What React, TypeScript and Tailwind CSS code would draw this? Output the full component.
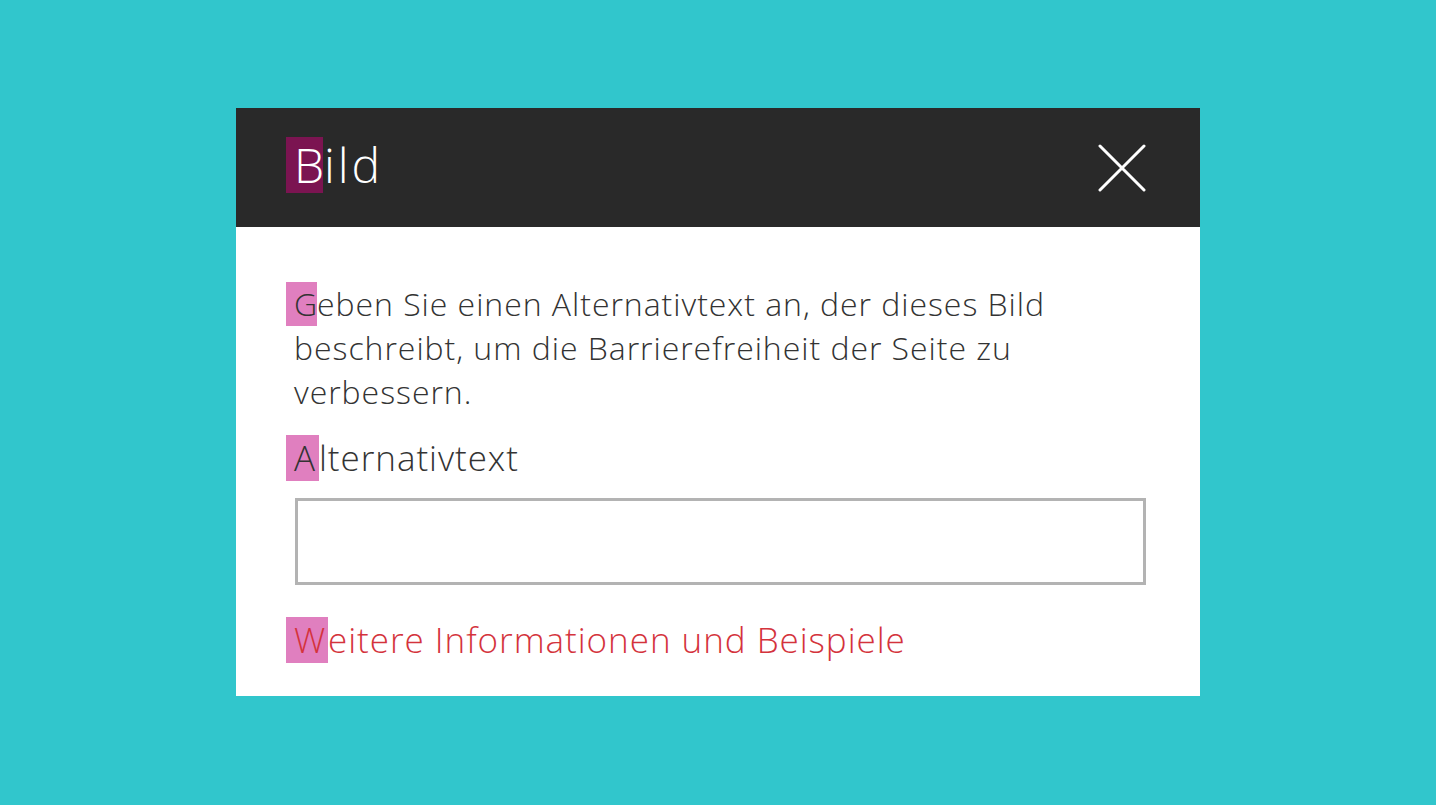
import React from 'react';

const font = { fontFamily: '"Open Sans", "Noto Sans", sans-serif' };

function Mark({ children, className }: { children: React.ReactNode; className: string }) {
  return <span className={`inline-block pl-[8px] ${className}`}>{children}</span>;
}

export default function App() {
  return (
    <div className="w-[1436px] h-[805px] bg-[#31c6cc] flex items-start justify-center pt-[108px]" style={font}>
      <div className="w-[964px] bg-white flex flex-col">
        <div className="h-[119px] bg-[#292929] flex items-center justify-between pl-[50px] pr-[54px]">
          <h1 className="text-white text-[48px] font-light leading-[56px] tracking-[0.06em] mb-[6px]">
            <Mark className="w-[37px] tracking-normal bg-[#7b1451]">B</Mark>
            <span className="pl-[1px]">ild</span>
          </h1>
          <button className="w-[48px] h-[48px] flex items-center justify-center">
            <svg width="48" height="48" viewBox="0 0 48 48" fill="none" stroke="white" strokeWidth="3" strokeLinecap="round">
              <path d="M2 2L46 46M46 2L2 46" />
            </svg>
          </button>
        </div>
        <div className="pl-[50px] pr-[54px] pt-[55px] pb-[33px] flex flex-col text-[#333333] font-light tracking-[0.06em]">
          <p className="text-[32px] leading-[44px]">
            <Mark className="w-[31px] bg-[#e07fbf]">G</Mark>eben Sie einen Alternativtext an, der dieses Bild
            <br />
            <span className="pl-[8px]">beschreibt, um die Barrierefreiheit der Seite zu</span>
            <br />
            <span className="pl-[8px]">verbessern.</span>
          </p>
          <label className="mt-[21px] text-[35px] leading-[46px]">
            <Mark className="w-[33px] bg-[#e07fbf]">A</Mark>lternativtext
          </label>
          <div className="ml-[9px] mt-[17px] h-[87px] border-[3px] border-[#b3b3b3] bg-white" />
          <a className="mt-[32px] text-[35px] leading-[46px] text-[#d4333c]">
            <Mark className="w-[42px] bg-[#e07fbf]">W</Mark>eitere Informationen und Beispiele
          </a>
        </div>
      </div>
    </div>
  );
}
